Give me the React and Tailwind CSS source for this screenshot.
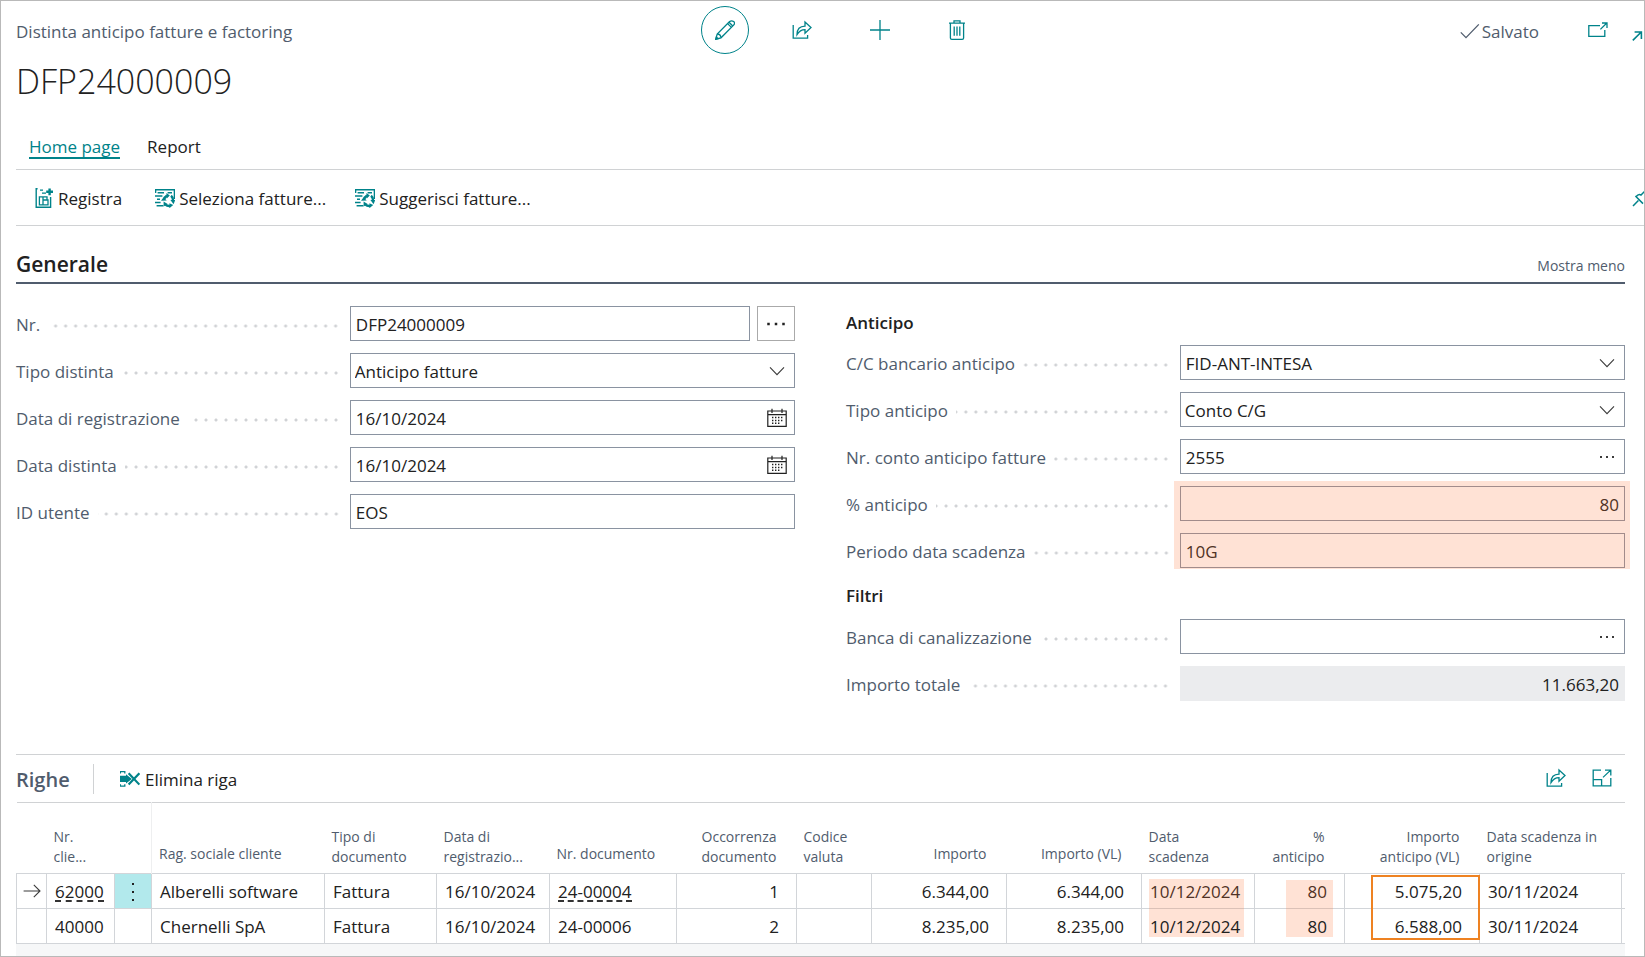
import clsx from 'clsx'

const HIGHLIGHT = 'bg-[rgba(255,120,55,0.21)]'

const Svg = ({ children, className = 'w-5 h-5 text-[#00838a]', viewBox = '0 0 20 20' }) => (
  <svg
    viewBox={viewBox}
    className={clsx('shrink-0', className)}
    fill="none"
    stroke="currentColor"
    strokeWidth="1.3"
    aria-hidden="true"
  >
    {children}
  </svg>
)

const PencilIcon = () => (
  <Svg>
    <path d="M.8 19.2 2.2 14 14.6 1.6Q16.6 0 18.6 1.6T18.4 5.4L6 17.8.8 19.2Z" />
    <path d="M12.6 3.6 16.4 7.4M14 2.2 17.8 6M2.2 14Q5.6 14 6 17.8" />
    <path d="M.8 19.2 1.4 17 3 18.6Z" fill="currentColor" />
  </Svg>
)

const ShareIcon = () => (
  <Svg>
    <path d="M1.2 5V18.2H15.6V15" />
    <path d="M5 14.6Q5 6.4 13 6.2V2L19 7.6 13 13.2V9.6Q8 9.6 5 14.6Z" />
  </Svg>
)

const PlusIcon = () => (
  <Svg>
    <path d="M10 0V20M0 10H20" />
  </Svg>
)

const TrashIcon = () => (
  <Svg>
    <path d="M2 3.2H18M7 3V.8H13V3M3.4 3.4V18Q3.4 19.3 4.8 19.3H15.2Q16.6 19.3 16.6 18V3.4" />
    <path d="M7.2 6.4V15.8M10 6.4V15.8M12.8 6.4V15.8" />
  </Svg>
)

const CheckIcon = () => (
  <Svg className="w-5 h-5 text-[#505c6d]">
    <path d="M.8 11.4 6 16.6 18.8 3.4" />
  </Svg>
)

const PopoutIcon = () => (
  <Svg>
    <path d="M12 5.6H.8V16.4H16.8V10" />
    <path d="M12.4 9.4 18.8 3M14 3H19V8" />
  </Svg>
)

const CollapseIcon = () => (
  <Svg className="w-3 h-5 text-[#00838a]" viewBox="0 0 12 20">
    <path d="M.8 15.4 9 7.2M2.6 7H9.4V14" strokeWidth="1.6" />
  </Svg>
)

const PinIcon = () => (
  <Svg className="w-3 h-5 text-[#00838a]" viewBox="0 0 12 20">
    <path d="M1 18 6.4 12.4M3.4 8 11 15.6M4 8.8Q6.4 5.6 9 7L13 3" strokeWidth="1.5" />
  </Svg>
)

const PostIcon = () => (
  <Svg>
    <path d="M3.6.8H2.2V19.2H16.6V9" strokeWidth="1.4" />
    <path d="M5.4 8.8H9V16.8H5.4ZM9 12H14V16.8H9ZM9 8.8H13V12" />
    <path d="M6 2.2H9M8 5.2H12" />
    <path d="M15.6.4V7.2M12.2 3.8H19" strokeWidth="2.4" />
  </Svg>
)

const InvoiceIcon = () => (
  <Svg>
    <path d="M.6 5V1.8H19.4V11" strokeWidth="1.4" />
    <path d="M2.6 4.8H9M12.6 4.8H17M0 8H7.4M2 11.2H5M0 14.4H5.6M1.6 17.8H8.4" strokeWidth="1.5" />
    <path d="M9 11.6Q9.6 9 12 7.6M16 7.8Q18 9.4 18 12M10.6 16.6Q12 18.2 15 18" strokeWidth="2.4" />
    <path d="M6 12.8 8.4 9.6 11.8 12.4ZM11.4 5 14.8 7.6 11.8 10.4ZM15.4 12H20.2L18.6 16.2ZM14.4 15.2V20.2L18.2 17ZM8.6 13.4V18.4L12.6 16Z" fill="currentColor" stroke="none" />
  </Svg>
)

const DeleteRowIcon = () => (
  <Svg>
    <path d="M.4 4.6V2.6H4.8V4.6M.4 15.2V17.2H4.8V15.2" />
    <path d="M0 6.8H6V5.2L11.8 10 6 14.6V13H0Z" fill="currentColor" stroke="none" />
    <path d="M8.6 4.2 19.4 15.6M19.4 4.2 8.6 15.6" strokeWidth="2.2" />
  </Svg>
)

const ExpandIcon = () => (
  <Svg>
    <path d="M9 2.2H1.2V17.8H18.8V10M1.2 11.6H9.6V17.8M11 9.4 18.4 2.4M13 2.2H18.8V7.6" />
  </Svg>
)

const ChevronIcon = () => (
  <Svg className="w-4 h-4 text-[#3b3b3b]" viewBox="0 0 16 16">
    <path d="M1 4.4 8 11.6 15 4.4" strokeWidth="1.1" />
  </Svg>
)

const CalendarIcon = () => (
  <Svg className="w-5 h-5 text-[#212121]">
    <path d="M.8 3H19.2V18.4H.8ZM1 6.6H19M5 .8V5M15 .8V5" strokeWidth="1.2" />
    <path d="M5 9.6H16.4M5 12.4H16.4M5 15.2H14" strokeDasharray="1.4 1.6" strokeWidth="1.5" />
  </Svg>
)

const DotsIcon = ({ className = 'w-4 h-4 text-[#3b3b3b]' }) => (
  <Svg className={className} viewBox="0 0 16 16">
    <path d="M1 8H3M7 8H9M13 8H15" strokeWidth="2" />
  </Svg>
)

const trailing = {
  chevron: ChevronIcon,
  calendar: CalendarIcon,
  dots: DotsIcon,
}

const box = 'block w-full h-[35px] pt-[2px] border rounded-none outline-none appearance-none'

const Field = ({ id, label, value, options, icon, right, disabled, assist }) => {
  const Icon = trailing[icon]
  return (
    <div className="flex items-center h-[35px]">
      <div className="flex items-center w-3/7 shrink-0 pr-[9px] text-[#505c6d]">
        <label htmlFor={id} className="shrink-0 pt-[2px] pr-2">
          {label}
        </label>
        <span className="flex-1 h-[10px] mt-1 bg-[radial-gradient(circle,#d0d2d5_1px,transparent_2px)] bg-size-[10px_10px] bg-right" />
      </div>
      <div className="flex flex-1 gap-[7px]">
        <div className="relative flex-1">
          {options ? (
            <select id={id} defaultValue={value} className={clsx(box, 'pl-1 border-[#8a93a1] bg-white')}>
              {options.map((o) => (
                <option key={o}>{o}</option>
              ))}
            </select>
          ) : (
            <input
              id={id}
              type="text"
              defaultValue={value}
              disabled={disabled}
              className={clsx(
                box,
                'px-[5px]',
                right && 'text-right',
                disabled ? 'border-[#ebecee] bg-[#ebecee]' : 'border-[#8a93a1] bg-white'
              )}
            />
          )}
          {Icon && (
            <span className="absolute inset-y-0 right-0 w-[37px] flex items-center justify-center pointer-events-none">
              <Icon />
            </span>
          )}
        </div>
        {assist && (
          <button type="button" aria-label="Altro" className="w-[38px] h-[35px] border border-[#aaaaaa] flex items-center justify-center">
            <DotsIcon className="w-5 h-5 text-[#212121]" />
          </button>
        )}
      </div>
    </div>
  )
}

const columns = [
  { width: 'w-[30px]', label: '' },
  { width: 'w-[68px]', label: ['Nr.', 'clie...'] },
  { width: 'w-[37px]', label: '' },
  { width: 'w-[173px]', label: 'Rag. sociale cliente' },
  { width: 'w-[112px]', label: ['Tipo di', 'documento'] },
  { width: 'w-[113px]', label: ['Data di', 'registrazio...'] },
  { width: 'w-[127px]', label: 'Nr. documento' },
  { width: 'w-[120px]', label: ['Occorrenza', 'documento'], right: true },
  { width: 'w-[75px]', label: ['Codice', 'valuta'] },
  { width: 'w-[135px]', label: 'Importo', right: true },
  { width: 'w-[135px]', label: 'Importo (VL)', right: true },
  { width: 'w-[113px]', label: ['Data', 'scadenza'] },
  { width: 'w-[90px]', label: ['%', 'anticipo'], right: true },
  { width: 'w-[135px]', label: ['Importo', 'anticipo (VL)'], right: true },
  { width: 'w-[142px]', label: ['Data scadenza in', 'origine'] },
]

const rows = [
  {
    selected: true,
    cells: ['62000', 'Alberelli software', 'Fattura', '16/10/2024', '24-00004', '1', '', '6.344,00', '6.344,00', '10/12/2024', '80', '5.075,20', '30/11/2024'],
  },
  {
    cells: ['40000', 'Chernelli SpA', 'Fattura', '16/10/2024', '24-00006', '2', '', '8.235,00', '8.235,00', '10/12/2024', '80', '6.588,00', '30/11/2024'],
  },
]

// marks laid over the cells of both rows, anchored to the first one
const marks = {
  11: <span className={clsx('absolute left-[7px] top-[5px] w-[95px] h-[58px]', HIGHLIGHT)} />,
  12: <span className={clsx('absolute right-[11px] top-[6px] w-[47px] h-[57px]', HIGHLIGHT)} />,
  13: <span className="absolute -right-px top-px w-[109px] h-[65px] border-2 border-[#ee8222]" />,
}

const Row = ({ row }) => {
  const [customer, ...rest] = row.cells
  const cell = 'relative h-[35px] px-2 pt-px border border-[#d2d5d9] whitespace-nowrap'
  const link = 'inline-block leading-4 border-b-2 border-dashed border-[#333333]'
  return (
    <tr>
      <td className="border border-[#d2d5d9]">
        {row.selected && (
          <Svg className="w-5 h-5 mx-auto text-[#3b3b3b]">
            <path d="M1.6 10H18M11.8 3.8 18 10 11.8 16.2" strokeWidth="1.1" />
          </Svg>
        )}
      </td>
      <td className={cell}>
        {row.selected ? <a href="#cliente" className={link}>{customer}</a> : customer}
      </td>
      <td className={clsx('border border-[#d2d5d9]', row.selected && 'bg-[#b2e9ec]')}>
        {row.selected && (
          <button type="button" aria-label="Altre opzioni" className="flex justify-center w-full">
            <Svg className="w-4 h-5 text-[#212121]" viewBox="0 0 16 20">
              <path d="M8 2V4M8 10V12M8 18V20" strokeWidth="2" />
            </Svg>
          </button>
        )}
      </td>
      {rest.map((value, i) => {
        const col = i + 3
        return (
          <td key={col} className={clsx(cell, columns[col].right && 'pr-[17px] text-right')}>
            {row.selected && col === 6 ? <a href="#documento" className={link}>{value}</a> : value}
            {row.selected && marks[col]}
          </td>
        )
      })}
      <td className="border-y border-[#d2d5d9]" />
    </tr>
  )
}

const App = () => {
  return (
    <div className="min-h-screen border border-[#b9b9b9] bg-white pl-[15px] overflow-hidden font-['Open_Sans','Noto_Sans',sans-serif] text-[17px] leading-6 text-[#212121]">
      <header>
        <div className="flex items-center h-[59px]">
          <span className="w-5/12 pt-[3px] text-[#505c6d]">Distinta anticipo fatture e factoring</span>
          <div className="flex items-center ml-[7px] pb-[2px]">
            <button type="button" aria-label="Modifica" className="w-12 h-12 mr-[43px] rounded-full border border-[#00838a] flex items-center justify-center">
              <PencilIcon />
            </button>
            <button type="button" aria-label="Condividi" className="mr-[58px]"><ShareIcon /></button>
            <button type="button" aria-label="Nuovo" className="mr-[57px]"><PlusIcon /></button>
            <button type="button" aria-label="Elimina"><TrashIcon /></button>
          </div>
          <div className="flex items-center ml-auto text-[#505c6d]">
            <CheckIcon />
            <span className="pt-[3px] ml-[2px] mr-[49px]">Salvato</span>
            <button type="button" aria-label="Apri in una nuova finestra" className="mr-6 pb-[2px]"><PopoutIcon /></button>
            <button type="button" aria-label="Riduci" className="mt-2"><CollapseIcon /></button>
          </div>
        </div>
        <h1 className="h-[54px] text-[34px] leading-[42px] font-light">DFP24000009</h1>
      </header>

      <nav className="flex items-end gap-[27px] h-[56px] pl-[13px] pb-[10px] border-b border-[#d0d2d4]">
        <a href="#home" className="leading-5 border-b-2 border-[#00838a] text-[#00838a]">Home page</a>
        <a href="#report" className="leading-5 border-b-2 border-transparent">Report</a>
      </nav>
      <div className="flex items-center h-[56px] pl-[18px] border-b border-[#d0d2d4]">
        <button type="button" className="flex items-center gap-1 mr-[33px]"><PostIcon /><span className="pt-[2px]">Registra</span></button>
        <button type="button" className="flex items-center gap-1 mr-[29px]"><InvoiceIcon /><span className="pt-[2px]">Seleziona fatture...</span></button>
        <button type="button" className="flex items-center gap-1"><InvoiceIcon /><span className="pt-[2px]">Suggerisci fatture...</span></button>
        <button type="button" aria-label="Blocca" className="ml-auto"><PinIcon /></button>
      </div>

      <main className="pr-[19px]">
        <section>
          <div className="flex items-end justify-between h-[58px] pb-1 border-b-2 border-[#505c6d]">
            <h2 className="text-[21px] leading-7 font-semibold">Generale</h2>
            <button type="button" className="text-sm leading-6 text-[#505c6d]">Mostra meno</button>
          </div>
          <div className="grid grid-cols-2 gap-x-[51px] pt-[22px]">
            <div className="flex flex-col gap-3">
              <Field id="nr" label="Nr." value="DFP24000009" assist />
              <Field id="tipo" label="Tipo distinta" value="Anticipo fatture" options={['Anticipo fatture', 'Factoring']} icon="chevron" />
              <Field id="data-reg" label="Data di registrazione" value="16/10/2024" icon="calendar" />
              <Field id="data-dist" label="Data distinta" value="16/10/2024" icon="calendar" />
              <Field id="utente" label="ID utente" value="EOS" />
            </div>
            <div>
              <h3 className="h-[39px] pt-[5px] font-semibold">Anticipo</h3>
              <div className="relative flex flex-col gap-3">
                <Field id="cc" label="C/C bancario anticipo" value="FID-ANT-INTESA" icon="chevron" />
                <Field id="tipo-ant" label="Tipo anticipo" value="Conto C/G" options={['Conto C/G', 'Banca']} icon="chevron" />
                <Field id="conto" label="Nr. conto anticipo fatture" value="2555" icon="dots" />
                <Field id="perc" label="% anticipo" value="80" right />
                <Field id="periodo" label="Periodo data scadenza" value="10G" />
                <div className={clsx('absolute -right-[5px] -bottom-px w-[456px] h-[88px] pointer-events-none', HIGHLIGHT)} />
              </div>
              <h3 className="h-[51px] pt-[16px] font-semibold">Filtri</h3>
              <div className="flex flex-col gap-3">
                <Field id="banca" label="Banca di canalizzazione" value="" icon="dots" />
                <Field id="totale" label="Importo totale" value="11.663,20" right disabled />
              </div>
            </div>
          </div>
        </section>

        <section className="mt-[53px] border-t border-[#d0d2d4]">
          <div className="flex items-center h-[47px]">
            <h2 className="w-[78px] h-[30px] mr-[26px] border-r border-[#d0d2d4] text-[20px] leading-8 font-semibold text-[#505c6d]">Righe</h2>
            <button type="button" className="flex items-center gap-[5px]"><DeleteRowIcon /><span className="pt-[2px]">Elimina riga</span></button>
            <button type="button" aria-label="Condividi righe" className="ml-auto mr-[26px] pb-[2px]"><ShareIcon /></button>
            <button type="button" aria-label="Espandi" className="mr-[13px] pb-[2px]"><ExpandIcon /></button>
          </div>
          <table className="w-full table-fixed border-collapse">
            <thead className="text-sm leading-5 text-[#505c6d]">
              <tr className="h-[71px] border-t border-[#d0d2d4]">
                {columns.map(({ width, label, right }, i) => (
                  <th
                    key={i}
                    scope="col"
                    className={clsx(
                      width,
                      'align-bottom font-normal px-[7px] whitespace-nowrap',
                      Array.isArray(label) ? 'pb-[6px]' : 'pb-[9px]',
                      right ? 'pr-[20px] text-right' : 'text-left',
                      i === 2 && 'border-r border-[#eeeff0]'
                    )}
                  >
                    {Array.isArray(label) ? <>{label[0]}<br />{label[1]}</> : label}
                  </th>
                ))}
                <th />
              </tr>
            </thead>
            <tbody>
              {rows.map((row) => (
                <Row key={row.cells[0]} row={row} />
              ))}
            </tbody>
          </table>
          <div className="h-3 bg-[#f6f7f8]" />
        </section>
      </main>
    </div>
  )
}

export default App
